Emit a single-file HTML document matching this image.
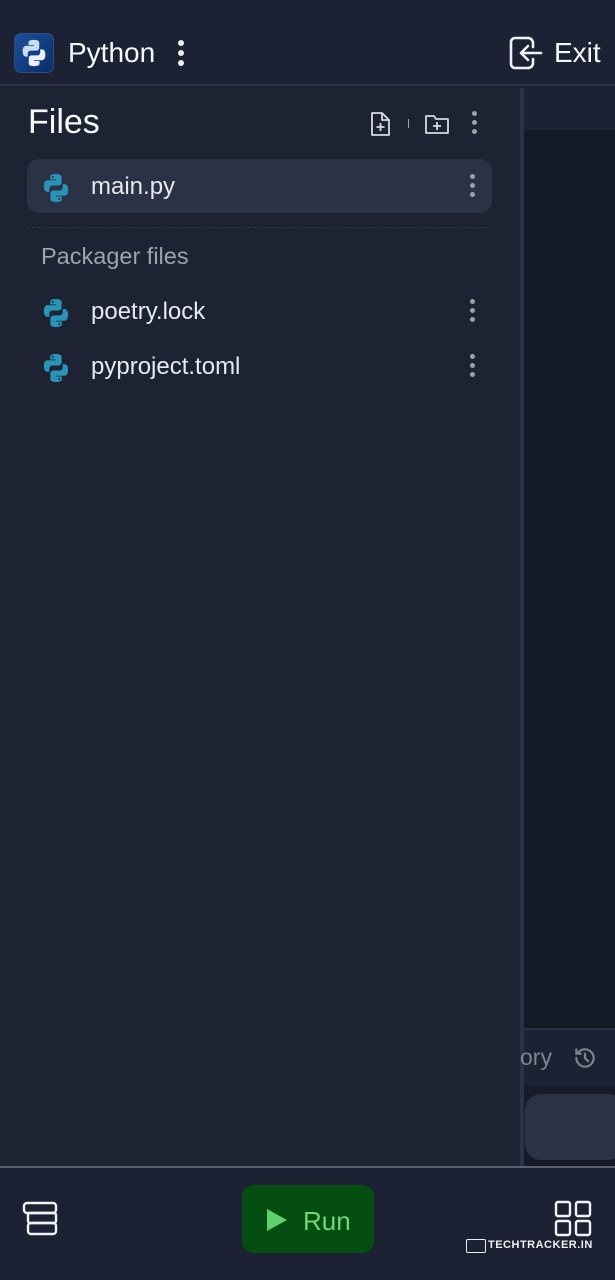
<!DOCTYPE html>
<html><head><meta charset="utf-8"><style>
*{margin:0;padding:0;box-sizing:border-box}
body{width:615px;height:1280px;overflow:hidden;background:#1c2333;font-family:"Liberation Sans",sans-serif;position:relative;color:#f5f9fc}
.abs{position:absolute}
.dots{position:absolute;width:6px}
.dots i{display:block;width:5px;height:5px;border-radius:50%;background:#9da2a6;margin:0 0 4px 0}
.fname{position:absolute;left:91px;font-size:24px;color:#e6e9ee}
</style></head><body>
<svg width="0" height="0" style="position:absolute"><defs>
<g id="py"><path d="M11.9 1.5c-4.6 0-4.3 2-4.3 2v2.1h4.4v.6H5.8S2.9 5.9 2.9 10.5s2.6 4.4 2.6 4.4h1.5v-2.2s-.1-2.6 2.5-2.6h4.3s2.4 0 2.4-2.4V3.8s.4-2.300-4.3-2.3zM9.5 2.9a.8.8 0 110 1.6.8.8 0 010-1.6z" fill="#2a93b8"/><path d="M12.1 22.5c4.6 0 4.3-2 4.3-2v-2.1H12v-.6h6.2s2.9.3 2.9-4.3-2.6-4.4-2.6-4.4H17v2.2s.1 2.6-2.5 2.6h-4.3s-2.4 0-2.4 2.4v4s-.4 2.2 4.3 2.2zm2.4-1.4a.8.8 0 110-1.6.8.8 0 010 1.6z" fill="#2a93b8"/></g>
</defs></svg>
<div class="abs" style="left:0;top:0;width:615px;height:86px;background:#1c2233;border-bottom:2px solid #2b3245"></div>
<div class="abs" style="left:14px;top:33px;width:40px;height:40px;border-radius:7px;background:linear-gradient(135deg,#1d4f9a,#0b2d66);border:1px solid #2d4f80"><svg width="30" height="30" viewBox="0 0 24 24" style="margin:4px"><path d="M11.9 1.5c-4.6 0-4.3 2-4.3 2v2.1h4.4v.6H5.8S2.9 5.9 2.9 10.5s2.6 4.4 2.6 4.4h1.5v-2.2s-.1-2.6 2.5-2.6h4.3s2.4 0 2.4-2.4V3.8s.4-2.3-4.3-2.3z" fill="#c8dcf0"/><path d="M12.1 22.5c4.6 0 4.3-2 4.3-2v-2.1H12v-.6h6.2s2.9.3 2.9-4.3-2.6-4.4-2.6-4.4H17v2.2s.1 2.6-2.5 2.6h-4.3s-2.4 0-2.4 2.4v4s-.4 2.2 4.3 2.2z" fill="#e8eef6"/></svg></div>
<div class="abs" style="left:68px;top:37px;font-size:28px;color:#f5f9fc">Python</div>
<div class="dots" style="left:178px;top:40px"><i style="background:#eee;width:6px;height:6px"></i><i style="background:#eee;width:6px;height:6px"></i><i style="background:#eee;width:6px;height:6px"></i></div>
<svg class="abs" style="left:508px;top:35px" width="36" height="36" viewBox="0 0 36 36" fill="none" stroke="#f0f2f5" stroke-width="2.6" stroke-linecap="round" stroke-linejoin="round"><path d="M20 3H7a4 4 0 00-4 4v22a4 4 0 004 4h13"/><path d="M20 3a5 5 0 015 5v4M20 33a5 5 0 005-5v-4"/><path d="M33 18H13M20 11l-7 7 7 7"/></svg>
<div class="abs" style="left:554px;top:37px;font-size:28px">Exit</div>
<div class="abs" style="left:0;top:88px;width:520px;height:1078px;background:#1e2333"></div>
<div class="abs" style="left:520px;top:88px;width:4px;height:1078px;background:#2b3245"></div>
<div class="abs" style="left:524px;top:88px;width:91px;height:42px;background:#1c2233"></div>
<div class="abs" style="left:524px;top:130px;width:91px;height:898px;background:#141927"></div>
<div class="abs" style="left:524px;top:1028px;width:91px;height:2px;background:#2b3245"></div>
<div class="abs" style="left:524px;top:1030px;width:91px;height:56px;background:#1c2233"></div>
<div class="abs" style="left:524px;top:1086px;width:91px;height:80px;background:#161b29"></div>
<div class="abs" style="left:520px;top:1044px;font-size:23px;color:#7c8290">ory</div>
<svg class="abs" style="left:571px;top:1045px" width="28" height="26" viewBox="0 0 24 24" fill="none" stroke="#7c8290" stroke-width="2" stroke-linecap="round"><path d="M4 12a8 8 0 108-8 8 8 0 00-7 4"/><path d="M4 4v4h4M12 8v4l3 3"/></svg>
<div class="abs" style="left:525px;top:1094px;width:100px;height:66px;border-radius:16px;background:#2b3245"></div>
<div class="abs" style="left:28px;top:103px;font-size:34px;color:#f5f9fc">Files</div>
<svg class="abs" style="left:368px;top:110px" width="26" height="28" viewBox="0 0 26 28" fill="none" stroke="#d8dbe0" stroke-width="1.8" stroke-linejoin="round"><path d="M4 3h10l7 7v15H4z"/><path d="M14 3v7h7M12.5 13v8M8.5 17h8"/></svg>
<div class="abs" style="left:408px;top:119px;width:1px;height:9px;background:#9da2a6"></div>
<svg class="abs" style="left:423px;top:110px" width="28" height="28" viewBox="0 0 28 28" fill="none" stroke="#d8dbe0" stroke-width="1.8" stroke-linejoin="round"><path d="M3 6h8l2 3h12v14H3z"/><path d="M14 12v8M10 16h8"/></svg>
<div class="dots" style="left:472px;top:111px"><i></i><i></i><i></i></div>
<div class="abs" style="left:27px;top:159px;width:465px;height:54px;border-radius:12px;background:#2b3245"></div>
<svg class="abs" style="left:40px;top:172px" width="32" height="32" viewBox="0 0 24 24"><use href="#py"/></svg>
<div class="fname" style="top:173px">main.py</div>
<div class="dots" style="left:470px;top:174px"><i></i><i></i><i></i></div>
<div class="abs" style="left:27px;top:227px;width:465px;border-top:1px dashed #2e3548"></div>
<div class="abs" style="left:41px;top:243px;font-size:23.5px;color:#9ea3ad">Packager files</div>
<svg class="abs" style="left:40px;top:297px" width="32" height="32" viewBox="0 0 24 24"><use href="#py"/></svg>
<div class="fname" style="top:298px">poetry.lock</div>
<div class="dots" style="left:470px;top:299px"><i></i><i></i><i></i></div>
<svg class="abs" style="left:40px;top:352px" width="32" height="32" viewBox="0 0 24 24"><use href="#py"/></svg>
<div class="fname" style="top:353px">pyproject.toml</div>
<div class="dots" style="left:470px;top:354px"><i></i><i></i><i></i></div>
<div class="abs" style="left:0;top:1166px;width:615px;height:2px;background:#5a6070"></div>
<div class="abs" style="left:0;top:1168px;width:615px;height:112px;background:#1c2233"></div>
<svg class="abs" style="left:22px;top:1201px" width="38" height="36" viewBox="0 0 38 36" fill="none" stroke="#f0f2f5" stroke-width="2.4" stroke-linejoin="round"><rect x="2" y="2" width="32" height="10" rx="3"/><rect x="6" y="12" width="28" height="10" rx="2"/><rect x="6" y="22" width="28" height="11" rx="3"/></svg>
<div class="abs" style="left:242px;top:1185px;width:132px;height:68px;border-radius:12px;background:#054e11"></div>
<svg class="abs" style="left:266px;top:1208px" width="22" height="24" viewBox="0 0 22 24"><path d="M1 1l20 11L1 23z" fill="#5fd26c"/></svg>
<div class="abs" style="left:303px;top:1206px;font-size:26px;color:#6fd67a">Run</div>
<svg class="abs" style="left:554px;top:1200px" width="40" height="38" viewBox="0 0 40 38" fill="none" stroke="#f0f2f5" stroke-width="2.4"><rect x="2" y="2" width="14" height="14" rx="2"/><rect x="22" y="2" width="14" height="14" rx="2"/><rect x="2" y="21" width="14" height="14" rx="2"/><rect x="22" y="21" width="14" height="14" rx="2"/></svg>
<div class="abs" style="left:466px;top:1239px;width:20px;height:14px;border:1.5px solid #eee;border-radius:2px"></div>
<div class="abs" style="left:488px;top:1239px;font-size:11px;font-weight:bold;color:#f0f0f0;letter-spacing:0.5px">TECHTRACKER.IN</div>
</body></html>
